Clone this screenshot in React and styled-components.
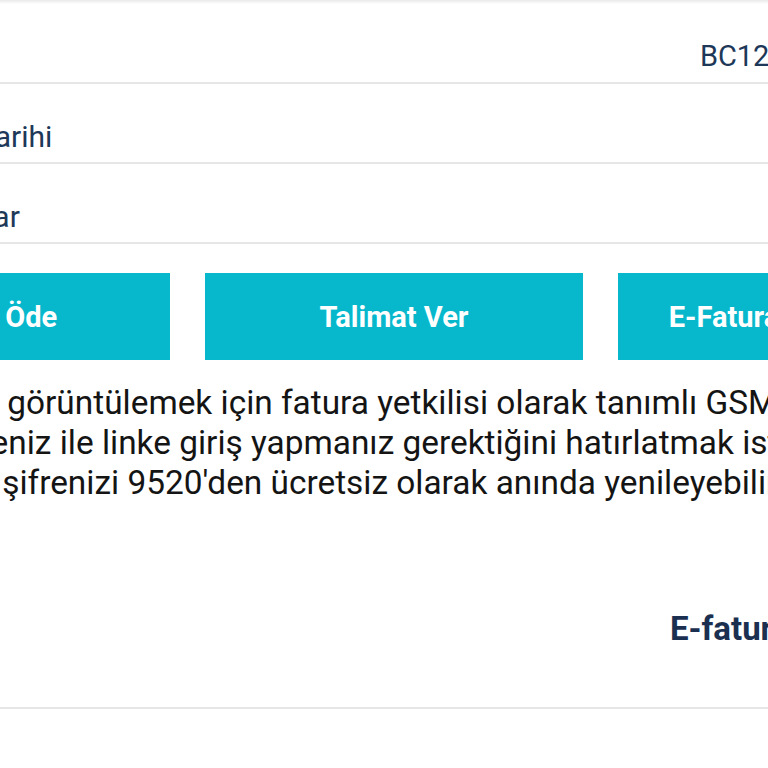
import styled, { createGlobalStyle } from "styled-components";

const GlobalStyle = createGlobalStyle`
  html, body {
    margin: 0;
    padding: 0;
    background: #ffffff;
    overflow: hidden;
  }
  body {
    font-family: Roboto, "Noto Sans", "Liberation Sans", sans-serif;
  }
`;

// the screen is zoomed in, so the page is wider than the window
const Page = styled.div`
  width: 1236px;
  margin-left: -224px;
  padding: 0 16px;
  box-sizing: border-box;
`;

const TopShade = styled.div`
  height: 4px;
  margin: 0 -16px;
  background: linear-gradient(#e9e9e9, #ffffff);
`;

const InfoRow = styled.div`
  display: flex;
  justify-content: space-between;
  align-items: center;
  margin: 0 -16px;
  padding: 36px 47px 9px 41px;
  line-height: 33px;
  font-size: 30px;
  color: #1d3858;
  border-bottom: 2px solid #e6e6e6;
`;

const Label = styled.span``;

const Value = styled.span`
  font-size: 29px;
  text-align: right;
`;

const Buttons = styled.div`
  display: grid;
  grid-template-columns: repeat(3, 1fr);
  gap: 35px;
  margin-top: 29px;
`;

const ActionButton = styled.button`
  height: 87px;
  padding: 0;
  border: none;
  background: #07b8cd;
  color: #ffffff;
  font-family: Roboto, "Liberation Sans", sans-serif;
  font-weight: 700;
  font-size: 29px;
  white-space: nowrap;
  overflow: hidden;
`;

const Notice = styled.div`
  margin-top: 23px;
  margin-left: -56px;
  font-size: 33.4px;
  line-height: 40px;
  color: #141414;
`;

const NoticeLine = styled.div`
  white-space: nowrap;
`;

const LinkRow = styled.div`
  display: flex;
  justify-content: flex-end;
  margin: 0 -16px;
  padding: 108px 74px 60px 0;
  border-bottom: 2px solid #e6e6e6;
`;

const InfoLink = styled.a`
  font-size: 33px;
  line-height: 36px;
  font-weight: 700;
  color: #1b3050;
  text-decoration: none;
`;

const rows = [
  { label: "Fatura No", value: "BC12045678901234" },
  { label: "Son Ödeme Tarihi", value: "15.05.2024" },
  { label: "Ödenecek tutar", value: "1.245,90 TL" },
];

export default function App() {
  return (
    <>
      <GlobalStyle />
      <Page>
        <TopShade />
        {rows.map((r) => (
          <InfoRow key={r.label}>
            <Label>{r.label}</Label>
            <Value>{r.value}</Value>
          </InfoRow>
        ))}
        <Buttons>
          <ActionButton>Hemen Öde</ActionButton>
          <ActionButton>Talimat Ver</ActionButton>
          <ActionButton>E-Faturaya Geçiş Yap</ActionButton>
        </Buttons>
        <Notice>
          <NoticeLine>E-Fatura belgenizi görüntülemek için fatura yetkilisi olarak tanımlı GSM</NoticeLine>
          <NoticeLine>numaranız ve şifreniz ile linke giriş yapmanız gerektiğini hatırlatmak isteriz.</NoticeLine>
          <NoticeLine>Ayrıca unutulmuş şifrenizi 9520'den ücretsiz olarak anında yenileyebilirsiniz.</NoticeLine>
        </Notice>
        <LinkRow>
          <InfoLink href="#">E-fatura Hakkında</InfoLink>
        </LinkRow>
      </Page>
    </>
  );
}
